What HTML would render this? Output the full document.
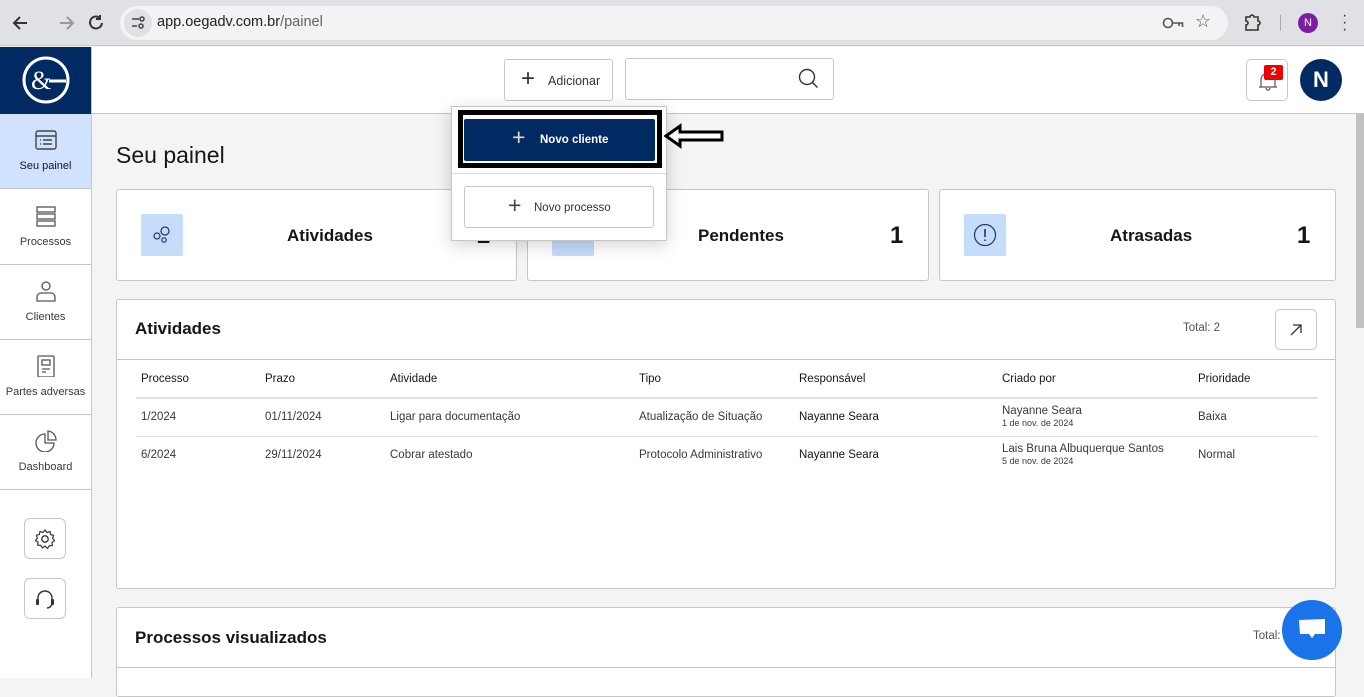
<!DOCTYPE html>
<html><head><meta charset="utf-8"><style>
*{box-sizing:border-box;margin:0;padding:0}
body{width:1364px;height:678px;overflow:hidden;font-family:"Liberation Sans",sans-serif;background:#f4f4f4;position:relative;color:#161616}
.abs{position:absolute}
.chrome{left:0;top:0;width:1364px;height:46px;background:#dfe1e5;border-bottom:1px solid #c4c7cc}
.pill{left:120px;top:6px;width:1108px;height:34px;border-radius:17px;background:#f1f3f4}
.side{left:0;top:47px;width:92px;height:631px;background:#fff;border-right:1px solid #c6c6c6}
.logo{left:0;top:47px;width:91px;height:67px;background:#012a63}
.nav{left:0;width:91px;height:75px;border-bottom:1px solid #c6c6c6;text-align:center;font-size:11px;color:#393939}
.nav svg{display:block;margin:15px auto 9px}
.hdr{left:92px;top:47px;width:1272px;height:67px;background:#fff;border-bottom:1px solid #c6c6c6}
.card{background:#fff;border:1px solid #c6c6c6;border-radius:3px}
.ic{width:42px;height:42px;background:#c5dcfb;border-radius:2px}
.ct{font-size:17px;font-weight:bold;color:#161616}
.num{font-size:24px;font-weight:bold}
th,td{text-align:left;font-size:11.5px;font-weight:normal;color:#393939}
.btn{border:1px solid #c6c6c6;border-radius:3px;background:#fff}
</style></head><body>
<div class="abs chrome"></div>
<svg class="abs" style="left:10px;top:12px" width="100" height="22" viewBox="0 0 100 22"><path d="M17 11H5M10 5l-6 6 6 6" stroke="#333" stroke-width="2" fill="none"/><path d="M50 11h12M57 5l6 6-6 6" stroke="#999" stroke-width="2" fill="none"/><path d="M90 6a6 6 0 1 0 2 5M90 3v4h-4" stroke="#333" stroke-width="2" fill="none"/></svg>
<div class="abs pill"></div>
<div class="abs" style="left:124px;top:9px;width:28px;height:28px;border-radius:14px;background:#dfe1e5"></div>
<svg class="abs" style="left:130px;top:15px" width="16" height="16"><path d="M2 4h7M2 11h5" stroke="#444" stroke-width="1.6"/><circle cx="12" cy="4" r="2" fill="none" stroke="#444" stroke-width="1.5"/><circle cx="11" cy="11" r="2" fill="none" stroke="#444" stroke-width="1.5"/></svg>
<div class="abs" style="left:157px;top:14px;font-size:14.5px;color:#202124">app.oegadv.com.br<span style="color:#5f6368">/painel</span></div>
<svg class="abs" style="left:1162px;top:16px" width="22" height="14"><circle cx="6" cy="7" r="4.5" fill="none" stroke="#555" stroke-width="1.6"/><path d="M10.5 7h10v4M17 7v3" stroke="#555" stroke-width="1.6" fill="none"/></svg>
<div class="abs" style="left:1195px;top:11px;font-size:18px;color:#555">☆</div>
<svg class="abs" style="left:1243px;top:12px" width="20" height="20"><path d="M3 5h4a2 2 0 0 1 4 0h4v4a2 2 0 0 1 0 4v5H3v-5a2 2 0 0 0 0-4z" fill="none" stroke="#333" stroke-width="1.6"/></svg>
<div class="abs" style="left:1280px;top:15px;width:1px;height:16px;background:#aaa"></div>
<div class="abs" style="left:1298px;top:13px;width:20px;height:20px;border-radius:10px;background:#7b1fa2;color:#fff;font-size:11px;text-align:center;line-height:20px">N</div>
<div class="abs" style="left:1342px;top:12px;font-size:16px;color:#333;line-height:7px">·<br>·<br>·</div>

<div class="abs side"></div>
<div class="abs logo"><svg style="margin:9px 22px" width="48" height="48" viewBox="0 0 48 48"><circle cx="24" cy="24" r="22" fill="none" stroke="#fff" stroke-width="3"/><text x="9" y="33" font-size="26" fill="#fff" font-family="Liberation Serif">&amp;</text><path d="M27 25h17" stroke="#fff" stroke-width="3"/></svg></div>
<div class="abs nav" style="top:114px;background:#d0e2ff;color:#161616"><svg width="24" height="22"><rect x="2" y="2" width="20" height="18" rx="2" fill="none" stroke="#444" stroke-width="1.4"/><path d="M2 7h20M6 11h1M9 11h9M6 15h1M9 15h9" stroke="#444" stroke-width="1.4"/></svg>Seu painel</div>
<div class="abs nav" style="top:190px"><svg width="24" height="22"><rect x="3" y="2" width="18" height="5" fill="none" stroke="#555" stroke-width="1.3"/><rect x="3" y="9" width="18" height="5" fill="none" stroke="#555" stroke-width="1.3"/><rect x="3" y="16" width="18" height="5" fill="none" stroke="#555" stroke-width="1.3"/></svg>Processos</div>
<div class="abs nav" style="top:265px"><svg width="24" height="22"><circle cx="12" cy="6" r="4" fill="none" stroke="#555" stroke-width="1.3"/><path d="M3 21v-4a4 4 0 0 1 4-4h10a4 4 0 0 1 4 4v4z" fill="none" stroke="#555" stroke-width="1.3"/></svg>Clientes</div>
<div class="abs nav" style="top:340px"><svg width="24" height="22"><rect x="4" y="1" width="16" height="21" rx="1" fill="none" stroke="#555" stroke-width="1.3"/><rect x="8" y="5" width="8" height="5" fill="none" stroke="#555" stroke-width="1.3"/><path d="M8 14h8M8 17h4" stroke="#555" stroke-width="1.3"/></svg>Partes adversas</div>
<div class="abs nav" style="top:415px"><svg width="24" height="22"><path d="M11 4a9 9 0 1 0 9 9h-9z" fill="none" stroke="#555" stroke-width="1.3"/><path d="M14 1v9h8a9 9 0 0 0-8-9z" fill="none" stroke="#555" stroke-width="1.3"/></svg>Dashboard</div>
<div class="abs btn" style="left:24px;top:518px;width:42px;height:41px;border-radius:6px"><svg style="margin:10px" width="20" height="20" viewBox="0 0 20 20"><path d="M10 1l2 2.5 3-1 .6 3 3 .9-1 3 2 2.3-2.6 1.7.3 3.1-3.1.3-1.7 2.6L10 17l-2.5 2-1.7-2.6-3.1-.3.3-3.1L.4 11.6l2-2.3-1-3 3-.9.6-3 3 1z" fill="none" stroke="#333" stroke-width="1.2"/><circle cx="10" cy="10" r="3.2" fill="none" stroke="#333" stroke-width="1.3"/></svg></div>
<div class="abs btn" style="left:24px;top:578px;width:42px;height:41px;border-radius:6px"><svg style="margin:10px" width="20" height="22" viewBox="0 0 20 22"><path d="M3 12V9a7 7 0 0 1 14 0v5a5 5 0 0 1-5 5" fill="none" stroke="#333" stroke-width="1.4"/><rect x="1" y="10" width="3" height="6" rx="1" fill="#333"/><rect x="16" y="10" width="3" height="6" rx="1" fill="#333"/></svg></div>

<div class="abs hdr"></div>
<div class="abs btn" style="left:504px;top:59px;width:109px;height:42px"><span class="abs" style="left:16px;top:5px;font-size:24px;font-weight:300;color:#333">+</span><span class="abs" style="left:43px;top:14px;font-size:12.5px;color:#333">Adicionar</span></div>
<div class="abs btn" style="left:625px;top:58px;width:209px;height:42px"><svg class="abs" style="left:172px;top:9px" width="22" height="22"><circle cx="9" cy="9" r="7.5" fill="none" stroke="#333" stroke-width="1.4"/><path d="M14.5 14.5l5 5" stroke="#333" stroke-width="1.4"/></svg></div>
<div class="abs btn" style="left:1246px;top:59px;width:42px;height:42px;border-radius:5px"><svg class="abs" style="left:10px;top:10px" width="22" height="22"><path d="M4 17V10a7 7 0 0 1 14 0v7M2 17h18M9 18a2 2 0 0 0 4 0" fill="none" stroke="#555" stroke-width="1.2"/></svg><div class="abs" style="left:17px;top:5px;width:19px;height:15px;background:#e00;color:#fff;font-size:11px;font-weight:bold;text-align:center;line-height:15px;border-radius:2px">2</div></div>
<div class="abs" style="left:1300px;top:59px;width:42px;height:42px;border-radius:21px;background:#012a63;color:#fff;font-size:22px;font-weight:bold;text-align:center;line-height:42px">N</div>
<div class="abs" style="left:1356px;top:114px;width:8px;height:214px;background:#c1c1c1"></div>

<div class="abs" style="left:116px;top:142px;font-size:23px;color:#161616">Seu painel</div>

<div class="abs card" style="left:116px;top:189px;width:401px;height:92px"><div class="abs ic" style="left:24px;top:24px"><svg style="margin:9px" width="24" height="24"><circle cx="7" cy="13" r="3" fill="none" stroke="#1c3866" stroke-width="1.2"/><circle cx="15" cy="8" r="4" fill="none" stroke="#1c3866" stroke-width="1.2"/><circle cx="14" cy="17" r="2.2" fill="none" stroke="#1c3866" stroke-width="1.2"/></svg></div><div class="abs ct" style="left:170px;top:36px">Atividades</div><div class="abs num" style="left:360px;top:32px">2</div></div>
<div class="abs card" style="left:527px;top:189px;width:402px;height:92px"><div class="abs ic" style="left:24px;top:24px"></div><div class="abs ct" style="left:170px;top:36px">Pendentes</div><div class="abs num" style="left:362px;top:32px">1</div></div>
<div class="abs card" style="left:939px;top:189px;width:397px;height:92px"><div class="abs ic" style="left:24px;top:24px"><svg style="margin:9px" width="24" height="24"><circle cx="12" cy="12" r="10.5" fill="none" stroke="#1c3866" stroke-width="1.2"/><path d="M12 6v8M12 16.5v1.5" stroke="#1c3866" stroke-width="1.6"/></svg></div><div class="abs ct" style="left:170px;top:36px">Atrasadas</div><div class="abs num" style="left:357px;top:32px">1</div></div>

<div class="abs card" style="left:116px;top:299px;width:1220px;height:290px">
<div class="abs" style="left:18px;top:19px;font-size:17px;font-weight:bold">Atividades</div>
<div class="abs" style="left:1066px;top:22px;font-size:11.5px;color:#525252">Total: 2</div>
<div class="abs btn" style="left:1158px;top:9px;width:42px;height:41px;border-radius:5px"><svg style="margin:13px" width="14" height="14"><path d="M2 12L12 2M4 2h8v8" fill="none" stroke="#333" stroke-width="1.3"/></svg></div>
<div class="abs" style="left:0;top:59px;width:1218px;height:1px;background:#c6c6c6"></div>
<table class="abs" style="left:19px;top:60px;width:1182px;border-collapse:collapse">
<tr style="height:38px;border-bottom:2px solid #e0e0e0"><th style="width:129px;padding-left:5px;color:#161616">Processo</th><th style="width:125px;color:#161616">Prazo</th><th style="width:249px;color:#161616">Atividade</th><th style="width:160px;color:#161616">Tipo</th><th style="width:203px;color:#161616">Responsável</th><th style="width:196px;color:#161616">Criado por</th><th style="color:#161616">Prioridade</th></tr>
<tr style="height:38px;border-bottom:1px solid #e0e0e0"><td style="padding-left:5px">1/2024</td><td>01/11/2024</td><td>Ligar para documentação</td><td>Atualização de Situação</td><td style="color:#161616">Nayanne Seara</td><td>Nayanne Seara<br><span style="font-size:9px">1 de nov. de 2024</span></td><td>Baixa</td></tr>
<tr style="height:38px"><td style="padding-left:5px">6/2024</td><td>29/11/2024</td><td>Cobrar atestado</td><td>Protocolo Administrativo</td><td style="color:#161616">Nayanne Seara</td><td>Lais Bruna Albuquerque Santos<br><span style="font-size:9px">5 de nov. de 2024</span></td><td>Normal</td></tr>
</table></div>

<div class="abs card" style="left:116px;top:607px;width:1220px;height:90px">
<div class="abs" style="left:18px;top:20px;font-size:17px;font-weight:bold">Processos visualizados</div>
<div class="abs" style="left:1136px;top:22px;font-size:11.5px;color:#525252">Total:</div>
<div class="abs" style="left:0;top:59px;width:1218px;height:1px;background:#c6c6c6"></div></div>
<div class="abs" style="left:1282px;top:600px;width:60px;height:60px;border-radius:30px;background:#1a73e8"><svg style="margin:18px 16px" width="28" height="24"><path d="M1 2l26-1v15H17l-3 4-3-4H2z" fill="#fff"/></svg></div>

<div class="abs" style="left:451px;top:106px;width:216px;height:135px;background:#fff;border:1px solid #c6c6c6;box-shadow:0 4px 16px rgba(0,0,0,.18)"></div>
<div class="abs" style="left:458px;top:110px;width:204px;height:58px;border:5px solid #000"></div>
<div class="abs" style="left:464px;top:119px;width:191px;height:42px;background:#012a63;border-radius:2px;color:#fff"><span class="abs" style="left:48px;top:5px;font-size:23px;font-weight:300;color:#ddd">+</span><span class="abs" style="left:76px;top:15px;font-size:11.5px;font-weight:bold">Novo cliente</span></div>
<div class="abs" style="left:452px;top:173px;width:214px;height:1px;background:#ddd"></div>
<div class="abs btn" style="left:464px;top:186px;width:190px;height:42px"><span class="abs" style="left:43px;top:5px;font-size:23px;font-weight:300;color:#444">+</span><span class="abs" style="left:69px;top:15px;font-size:11.5px;color:#333">Novo processo</span></div>
<svg class="abs" style="left:663px;top:122px" width="62" height="28"><path d="M3 14L17 4v6h42v8H17v6z" fill="#fff" stroke="#000" stroke-width="3" stroke-linejoin="miter"/></svg>
</body></html>
